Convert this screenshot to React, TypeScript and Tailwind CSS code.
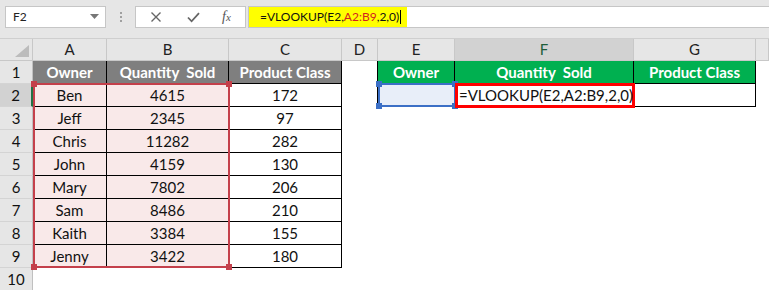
import React from 'react';

const colW = ['w-[33px]', 'w-[74px]', 'w-[122px]', 'w-[113px]', 'w-[36px]', 'w-[77px]', 'w-[179px]', 'w-[122px]', 'flex-1'];
const letters = ['', 'A', 'B', 'C', 'D', 'E', 'F', 'G', ''];

const data: [string, number, number][] = [
  ['Ben', 4615, 172],
  ['Jeff', 2345, 97],
  ['Chris', 11282, 282],
  ['John', 4159, 130],
  ['Mary', 7802, 206],
  ['Sam', 8486, 210],
  ['Kaith', 3384, 155],
  ['Jenny', 3422, 180],
];

const Handle = ({ className }: { className: string }) => (
  <span className={`absolute w-[6px] h-[6px] ${className}`} />
);

const RowHead = ({ n, active }: { n: number; active?: boolean }) => (
  <div
    className={`${colW[0]} shrink-0 h-full flex items-center justify-center border-b border-[#d4d4d4] ${
      active ? 'bg-[#d2d2d2] border-r-2 border-r-[#217346]' : 'bg-[#e6e6e6] border-r border-r-[#c0c0c0]'
    }`}
  >
    {n}
  </div>
);

export default function App() {
  return (
    <div className="w-[769px] h-[290px] bg-white overflow-hidden relative text-[#111] font-['Lato','Open_Sans',sans-serif]">
      {/* formula bar */}
      <div className="h-[39px] bg-[#e6e6e6] flex items-start pt-[6px] border-b border-[#cfcfcf]">
        <div className="ml-[5px] w-[101px] h-[22px] bg-white border border-[#c6c6c6] flex items-center pl-[7px] pr-[6px] text-[12px] text-[#222]">
          <span className="flex-1">F2</span>
          <svg width="9" height="6" viewBox="0 0 9 6"><path d="M0 0h9L4.5 5z" fill="#777" /></svg>
        </div>
        <div className="ml-[14px] h-[22px] flex flex-col justify-center gap-[2px]">
          <span className="w-[2px] h-[2px] bg-[#a0a0a0]" />
          <span className="w-[2px] h-[2px] bg-[#a0a0a0]" />
          <span className="w-[2px] h-[2px] bg-[#a0a0a0]" />
        </div>
        <div className="ml-[13px] w-[111px] h-[22px] bg-white border border-[#c6c6c6] flex items-center">
          <svg className="ml-[14px]" width="12" height="12" viewBox="0 0 12 12">
            <path d="M1.5 1.5l9 9M10.5 1.5l-9 9" stroke="#666" strokeWidth="1.4" />
          </svg>
          <svg className="ml-[25px]" width="13" height="11" viewBox="0 0 13 11">
            <path d="M1 5.5l3.6 3.8L12 1.2" stroke="#666" strokeWidth="1.8" fill="none" />
          </svg>
          <span className="ml-[22px] text-[14px] italic text-[#555] font-['Liberation_Serif',serif] leading-none">
            f<span className="text-[11px]">x</span>
          </span>
        </div>
        <div className="ml-[2px] flex-1 h-[22px] bg-white border border-[#c6c6c6] border-r-0 flex items-stretch">
          <div className="w-[158px] bg-[#ffff00] flex items-center pl-[11px] text-[12px] whitespace-pre">
            <span>=VLOOKUP(E2,</span>
            <span className="text-[#d2231f]">A2:B9</span>
            <span>,2,0)</span>
            <span className="ml-[1px] w-px h-[14px] bg-black" />
          </div>
        </div>
      </div>

      {/* sheet */}
      <div className="relative text-[15px]">
        {/* column headers */}
        <div className="h-[22px] flex">
          {letters.map((l, i) => (
            <div
              key={i}
              className={`${colW[i]} shrink-0 h-full flex items-center justify-center border-r border-b border-[#c8c8c8] ${
                l === 'F' ? 'bg-[#d2d2d2] text-[#1e5e3a]' : 'bg-[#e6e6e6] text-[#222]'
              }`}
            >
              {i === 0 ? (
                <svg className="self-end ml-auto mr-[3px] mb-[3px]" width="14" height="12" viewBox="0 0 14 12">
                  <path d="M14 0v12H0z" fill="#bcbcbc" />
                </svg>
              ) : (
                l
              )}
            </div>
          ))}
        </div>

        {/* row 1 */}
        <div className="h-[23px] flex">
          <RowHead n={1} />
          <div className={`${colW[1]} shrink-0 bg-[#7f7f7f] text-white font-bold flex items-center justify-center border-r border-b border-black`}>Owner</div>
          <div className={`${colW[2]} shrink-0 bg-[#7f7f7f] text-white font-bold flex items-center justify-center border-r border-b border-black whitespace-pre`}>Quantity  Sold</div>
          <div className={`${colW[3]} shrink-0 bg-[#7f7f7f] text-white font-bold flex items-center justify-center border-r border-b border-black`}>Product Class</div>
          <div className={`${colW[4]} shrink-0 border-r border-black`} />
          <div className={`${colW[5]} shrink-0 bg-[#00b050] text-white font-bold flex items-center justify-center border-r border-b border-black`}>Owner</div>
          <div className={`${colW[6]} shrink-0 bg-[#00b050] text-white font-bold flex items-center justify-center border-r border-b border-black whitespace-pre`}>Quantity  Sold</div>
          <div className={`${colW[7]} shrink-0 bg-[#00b050] text-white font-bold flex items-center justify-center border-r border-b border-black`}>Product Class</div>
          <div className="flex-1" />
        </div>

        {/* data rows */}
        {data.map(([name, qty, cls], i) => (
          <div key={name} className="h-[23px] flex">
            <RowHead n={i + 2} active={i === 0} />
            <div className={`${colW[1]} shrink-0 bg-[#f9e9e9] flex items-center justify-center border-r border-b border-black`}>{name}</div>
            <div className={`${colW[2]} shrink-0 bg-[#f9e9e9] flex items-center justify-center border-r border-b border-black`}>{qty}</div>
            <div className={`${colW[3]} shrink-0 flex items-center justify-center border-r border-b border-black`}>{cls}</div>
            {i === 0 ? (
              <>
                <div className={`${colW[4]} shrink-0 border-r border-black`} />
                <div className={`${colW[5]} shrink-0 border-r border-b border-black`} />
                <div className={`${colW[6]} shrink-0 border-r border-b border-black`} />
                <div className={`${colW[7]} shrink-0 border-r border-b border-black`} />
              </>
            ) : null}
            <div className="flex-1" />
          </div>
        ))}

        {/* row 10 */}
        <div className="h-[23px] flex">
          <RowHead n={10} />
          <div className="flex-1" />
        </div>

        {/* range highlight A2:B9 */}
        <div className="absolute left-[33px] top-[44px] w-[197px] h-[185px] border-2 border-[#c4404b]">
          <Handle className="-left-[4px] -top-[4px] bg-[#c4404b]" />
          <Handle className="-right-[4px] -top-[4px] bg-[#c4404b]" />
          <Handle className="-left-[4px] -bottom-[4px] bg-[#c4404b]" />
          <Handle className="-right-[4px] -bottom-[4px] bg-[#c4404b]" />
        </div>

        {/* range highlight E2 */}
        <div className="absolute left-[378px] top-[44px] w-[78px] h-[24px] border-2 border-[#3b6fc6] bg-[#e8eef9]">
          <Handle className="-left-[4px] -top-[4px] bg-[#3b6fc6]" />
          <Handle className="-right-[4px] -top-[4px] bg-[#3b6fc6]" />
          <Handle className="-left-[4px] -bottom-[4px] bg-[#3b6fc6]" />
          <Handle className="-right-[4px] -bottom-[4px] bg-[#3b6fc6]" />
        </div>

        {/* editing cell F2 */}
        <div className="absolute left-[455px] top-[44px] w-[180px] h-[25px] border-[3px] border-[#ff0000] bg-white flex items-center pl-[1px] text-[15px] whitespace-pre">
          =VLOOKUP(E2,A2:B9,2,0)
        </div>
      </div>
    </div>
  );
}
